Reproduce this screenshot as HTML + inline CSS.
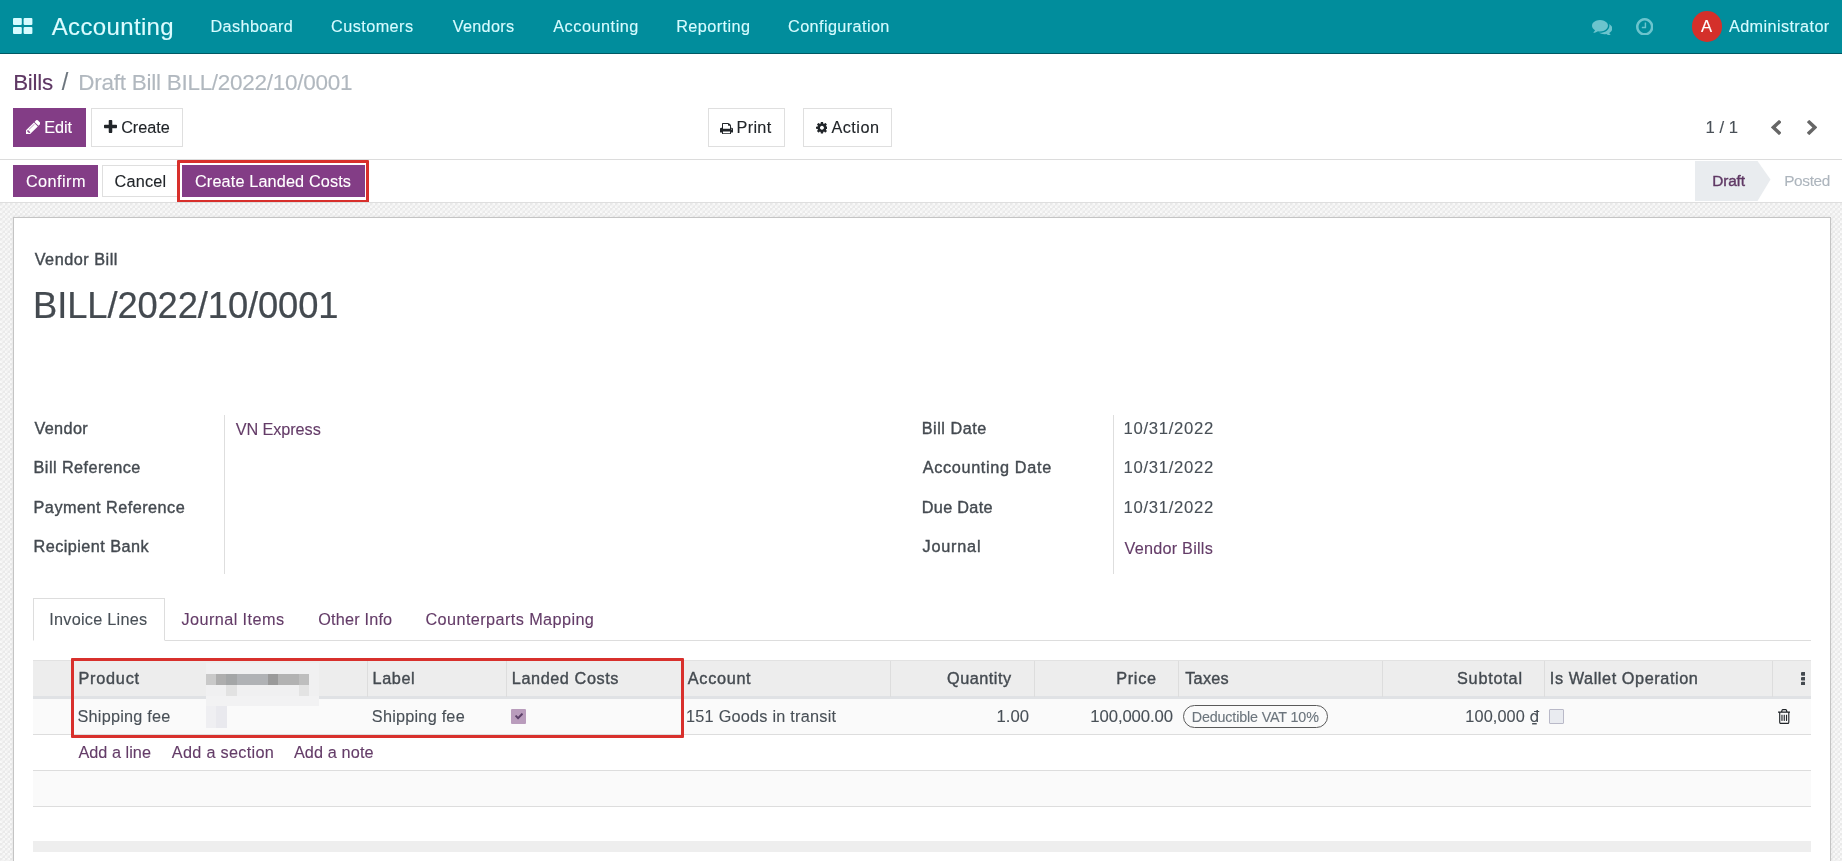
<!DOCTYPE html>
<html lang="en">
<head>
<meta charset="utf-8">
<title>Draft Bill BILL/2022/10/0001 - Accounting</title>
<style>
*{box-sizing:border-box;margin:0;padding:0}
html,body{width:1842px;height:861px;overflow:hidden;background:#fff;font-family:"Liberation Sans",sans-serif;color:#4c4c4c;font-size:16.25px}
a{text-decoration:none}
h1,b,label{font-weight:normal}
.t{position:absolute;white-space:pre;display:block;-webkit-text-stroke:.12px currentColor}
.page{position:absolute;left:0;top:0;width:1842px;height:861px;overflow:hidden;will-change:transform}
.m{-webkit-text-stroke:.38px currentColor}
.abs{position:absolute}
nav.top{position:absolute;left:0;top:0;width:1842px;height:54px;background:#018d9c;border-bottom:1px solid #005964}
.avatar{position:absolute;left:1691.5px;top:11px;width:30.5px;height:30.5px;border-radius:50%;background:#d4302a}
.cpanel{position:absolute;left:0;top:54px;width:1842px;height:106px;background:#fff;border-bottom:1px solid #dcdcdc}
.btn{position:absolute;border:1px solid #dfdfdf;background:#fff}
.btn.pri{background:#833d86;border-color:#833d86}
.statusbar{position:absolute;left:0;top:160px;width:1842px;height:42px;background:#fff}
.formbg{position:absolute;left:0;top:202px;width:1842px;height:659px;border-top:1px solid #dedede;background-color:#eaeaea;
 background-image:linear-gradient(45deg,#f9f9f9 25%,transparent 25%,transparent 75%,#f9f9f9 75%),linear-gradient(45deg,#f9f9f9 25%,transparent 25%,transparent 75%,#f9f9f9 75%);background-size:5px 5px;background-position:0 0,2.5px 2.5px}
.sheet{position:absolute;left:13px;top:217px;width:1818px;height:700px;background:#fff;border:1px solid #c4c4c4;box-shadow:0 0 4px rgba(0,0,0,.06)}
.vsep{position:absolute;width:1px;background:#dedede}
.hline{position:absolute;height:1px;background:#dddddd}
.redbox{position:absolute;border:3px solid #d8302c;border-radius:1px}
</style>
</head>
<body>
<div class="page">
<nav class="top">
  <svg class="abs" style="left:13px;top:18px" width="20" height="16" viewBox="0 0 20 16"><g fill="#d6fbff"><rect x="0" y="0" width="8.8" height="7" rx="1"/><rect x="10.6" y="0" width="8.8" height="7" rx="1"/><rect x="0" y="9" width="8.8" height="7" rx="1"/><rect x="10.6" y="9" width="8.8" height="7" rx="1"/></g></svg>
  <div class="avatar"></div>
<svg class="abs" style="left:1592.00px;top:19.80px;opacity:0.5" width="20.30" height="15.70" viewBox="0 256 1792 1408.111083984375" preserveAspectRatio="none"><path fill="#d6fbff" d="M1408 768q0 139-94 257t-256.500 186.500-353.500 68.500q-86 0-176-16-124 88-278 128-36 9-86 16h-3q-11 0-20.500-8t-11.500-21q-1-3-1-6.500t.5-6.500 2-6l2.500-5 3.500-5.500 4-5 4.500-5 4-4.500q5-6 23-25t26-29.500 22.500-29 25-38.500 20.500-44q-124-72-195-177t-71-224q0-139 94-257t256.500-186.500 353.500-68.500 353.500 68.500 256.500 186.500 94 257zm384 256q0 120-71 224.500t-195 176.500q10 24 20.500 44t25 38.500 22.500 29 26 29.500 23 25q1 1 4 4.500t4.500 5 4 5 3.500 5.500l2.500 5 2 6 .5 6.500-1 6.500q-3 14-13 22t-22 7q-50-7-86-16-154-40-278-128-90 16-176 16-271 0-472-132 58 4 88 4 161 0 309-45t264-129q125-92 192-212t67-254q0-77-23-152 129 71 204 178t75 230z"/></svg>
<svg class="abs" style="left:1635.80px;top:17.60px;opacity:0.5" width="17.40" height="17.60" viewBox="128 128 1536 1536" preserveAspectRatio="none"><path fill="#d6fbff" d="M1024 544v448q0 14-9 23t-23 9h-320q-14 0-23-9t-9-23v-64q0-14 9-23t23-9h224v-352q0-14 9-23t23-9h64q14 0 23 9t9 23zm416 352q0-148-73-273t-198-198-273-73-273 73-198 198-73 273 73 273 198 198 273 73 273-73 198-198 73-273zm224 0q0 209-103 385.500t-279.500 279.500-385.500 103-385.500-103-279.500-279.500-103-385.500 103-385.500 279.500-279.500 385.500-103 385.500 103 279.500 279.500 103 385.500z"/></svg>
<a class="t" style="left:51.67px;top:12px;font-size:24px;line-height:29px;color:#dcfcff;letter-spacing:0.364px;">Accounting</a>
<a class="t" style="left:210.51px;top:16px;font-size:16.25px;line-height:20px;color:#d6fbff;letter-spacing:0.364px;">Dashboard</a>
<a class="t" style="left:331.04px;top:16px;font-size:16.25px;line-height:20px;color:#d6fbff;letter-spacing:0.431px;">Customers</a>
<a class="t" style="left:452.67px;top:16px;font-size:16.25px;line-height:20px;color:#d6fbff;letter-spacing:0.300px;">Vendors</a>
<a class="t" style="left:553.20px;top:16px;font-size:16.25px;line-height:20px;color:#d6fbff;letter-spacing:0.533px;">Accounting</a>
<a class="t" style="left:676.17px;top:16px;font-size:16.25px;line-height:20px;color:#d6fbff;letter-spacing:0.418px;">Reporting</a>
<a class="t" style="left:788.06px;top:16px;font-size:16.25px;line-height:20px;color:#d6fbff;letter-spacing:0.388px;">Configuration</a>
<span class="t" style="left:1728.98px;top:16px;font-size:16.25px;line-height:20px;color:#d6fbff;letter-spacing:0.376px;">Administrator</span>
<span class="t" style="left:1701.00px;top:16px;font-size:16.6px;line-height:21px;color:#fff;letter-spacing:0.000px;">A</span>
</nav>
<div class="cpanel"></div>
<div class="btn pri" style="left:13px;top:108px;width:73px;height:38.5px"></div>
<div class="btn" style="left:91px;top:108px;width:92px;height:38.5px"></div>
<div class="btn" style="left:708px;top:108px;width:77px;height:38.5px"></div>
<div class="btn" style="left:803px;top:108px;width:89px;height:38.5px"></div>
<div class="statusbar"></div>
<div class="btn pri" style="left:13px;top:165px;width:85px;height:32px"></div>
<div class="btn" style="left:102px;top:165px;width:76px;height:32px"></div>
<div class="btn pri" style="left:182px;top:165px;width:183px;height:32px"></div>
<div class="redbox" style="left:177px;top:160px;width:192px;height:43px"></div>
<svg class="abs" style="left:1695px;top:161px" width="77" height="40" viewBox="0 0 77 40"><path d="M0 0H62.5L75.5 18.6L62.5 40H0Z" fill="#e9ecef"/></svg>
<svg class="abs" style="left:26.00px;top:120.10px" width="14.40" height="14.20" viewBox="128 149 1515 1515" preserveAspectRatio="none"><path fill="#fff" d="M491 1536l91-91-235-235-91 91v107h128v128h107zm523-928q0-22-22-22-10 0-17 7l-542 542q-7 7-7 17 0 22 22 22 10 0 17-7l542-542q7-7 7-17zm-54-192l416 416-832 832h-416v-416zm683 96q0 53-37 90l-166 166-416-416 166-165q36-38 90-38 53 0 91 38l235 234q37 39 37 91z"/></svg>
<svg class="abs" style="left:103.75px;top:120.20px" width="13.00" height="12.90" viewBox="192 128 1408 1408" preserveAspectRatio="none"><path fill="#212529" d="M1600 736v192q0 40-28 68t-68 28h-416v416q0 40-28 68t-68 28h-192q-40 0-68-28t-28-68v-416h-416q-40 0-68-28t-28-68v-192q0-40 28-68t68-28h416v-416q0-40 28-68t68-28h192q40 0 68 28t28 68v416h416q40 0 68 28t28 68z"/></svg>
<svg class="abs" style="left:720.00px;top:122.50px" width="13.00" height="11.25" viewBox="64 128 1664 1536" preserveAspectRatio="none"><path fill="#212529" d="M448 1536h896v-256h-896v256zm0-640h896v-384h-160q-40 0-68-28t-28-68v-160h-640v640zm1152 64q0-26-19-45t-45-19-45 19-19 45 19 45 45 19 45-19 19-45zm128 0v416q0 13-9.500 22.500t-22.500 9.500h-224v160q0 40-28 68t-68 28h-960q-40 0-68-28t-28-68v-160h-224q-13 0-22.500-9.500t-9.500-22.500v-416q0-79 56.500-135.500t135.500-56.500h64v-544q0-40 28-68t68-28h672q40 0 88 20t76 48l152 152q28 28 48 76t20 88v256h64q79 0 135.500 56.500t56.500 135.500z"/></svg>
<svg class="abs" style="left:815.60px;top:122.25px" width="11.90" height="11.50" viewBox="128 128 1536 1536" preserveAspectRatio="none"><path fill="#212529" d="M1152 896q0-106-75-181t-181-75-181 75-75 181 75 181 181 75 181-75 75-181zm512-109v222q0 12-8 23t-20 13l-185 28q-19 54-39 91 35 50 107 138 10 12 10 25t-9 23q-27 37-99 108t-94 71q-12 0-26-9l-138-108q-44 23-91 38-16 136-29 186-7 28-36 28h-222q-14 0-24.500-8.500t-11.500-21.500l-28-184q-49-16-90-37l-141 107q-10 9-25 9-14 0-25-11-126-114-165-168-7-10-7-23 0-12 8-23 15-21 51-66.500t54-70.500q-27-50-41-99l-183-27q-13-2-21-12.500t-8-23.500v-222q0-12 8-23t19-13l186-28q14-46 39-92-40-57-107-138-10-12-10-24 0-10 9-23 26-36 98.500-107.500t94.500-71.500q13 0 26 10l138 107q44-23 91-38 16-136 29-186 7-28 36-28h222q14 0 24.500 8.500t11.500 21.500l28 184q49 16 90 37l142-107q9-9 24-9 13 0 25 10 129 119 165 170 7 8 7 22 0 12-8 23-15 21-51 66.500t-54 70.500q26 50 41 98l183 28q13 2 21 12.500t8 23.500z"/></svg>
<svg class="abs" style="left:1771.00px;top:120.00px" width="10.30" height="14.90" viewBox="410 26 1036 1612" preserveAspectRatio="none"><path fill="#666" d="M1427 301l-531 531 531 531q19 19 19 45t-19 45l-166 166q-19 19-45 19t-45-19l-742-742q-19-19-19-45t19-45l742-742q19-19 45-19t45 19l166 166q19 19 19 45t-19 45z"/></svg>
<svg class="abs" style="left:1806.80px;top:120.00px" width="10.20" height="14.90" viewBox="346 26 1036 1612" preserveAspectRatio="none"><path fill="#666" d="M1363 877l-742 742q-19 19-45 19t-45-19l-166-166q-19-19-19-45t19-45l531-531-531-531q-19-19-19-45t19-45l166-166q19-19 45-19t45 19l742 742q19 19 19 45t-19 45z"/></svg>
<a class="t" style="left:13.17px;top:69px;font-size:22.4px;line-height:27px;color:#5f3864;letter-spacing:-0.241px;">Bills</a>
<span class="t" style="left:61.80px;top:68px;font-size:23.5px;line-height:28px;color:#6c757d;letter-spacing:0.000px;">/</span>
<span class="t" style="left:78.35px;top:69px;font-size:22.5px;line-height:27px;color:#b1b8bf;letter-spacing:-0.268px;">Draft Bill BILL/2022/10/0001</span>
<span class="t" style="left:44.15px;top:117px;font-size:16.25px;line-height:20px;color:#fff;letter-spacing:-0.015px;">Edit</span>
<span class="t" style="left:121.18px;top:117px;font-size:16.25px;line-height:20px;color:#212529;letter-spacing:-0.035px;">Create</span>
<span class="t" style="left:736.58px;top:117px;font-size:16.25px;line-height:20px;color:#212529;letter-spacing:0.296px;">Print</span>
<span class="t" style="left:831.40px;top:117px;font-size:16.25px;line-height:20px;color:#212529;letter-spacing:0.500px;">Action</span>
<span class="t" style="left:1705.62px;top:117px;font-size:16.7px;line-height:21px;color:#495057;letter-spacing:0.018px;">1 / 1</span>
<span class="t" style="left:25.93px;top:171px;font-size:16.25px;line-height:20px;color:#fff;letter-spacing:0.440px;">Confirm</span>
<span class="t" style="left:114.47px;top:171px;font-size:16.25px;line-height:20px;color:#212529;letter-spacing:0.226px;">Cancel</span>
<span class="t" style="left:195.01px;top:171px;font-size:16.25px;line-height:20px;color:#fff;letter-spacing:0.133px;">Create Landed Costs</span>
<span class="t m" style="left:1712.24px;top:171px;font-size:15.4px;line-height:19px;color:#5f3864;letter-spacing:-0.155px;">Draft</span>
<span class="t" style="left:1784.19px;top:171px;font-size:15.4px;line-height:19px;color:#adb5bd;letter-spacing:-0.345px;">Posted</span>
<div class="formbg"></div>
<div class="sheet">
  <div class="vsep" style="left:210px;top:197px;height:159px"></div>
  <div class="vsep" style="left:1099px;top:197px;height:159px"></div>
  <div class="hline" style="left:19px;top:422px;width:1778px"></div>
  <div class="abs" style="left:19px;top:380px;width:132px;height:43px;border:1px solid #dddddd;border-bottom-color:#fff;background:#fff"></div>
  <!-- table -->
  <div class="abs" style="left:19px;top:442px;width:1778px;height:36px;background:#ededed;border-top:1px solid #e2e2e2"></div>
  <div class="abs" style="left:19px;top:478px;width:1778px;height:3px;background:#e0e2e5"></div>
  <div class="abs" style="left:19px;top:481px;width:1778px;height:35.5px;background:#fafafa;border-bottom:1px solid #dddddd"></div>
  <div class="abs" style="left:19px;top:516.5px;width:1778px;height:36px;background:#fff;border-bottom:1px solid #dddddd"></div>
  <div class="abs" style="left:19px;top:552.5px;width:1778px;height:36.5px;background:#fafafa;border-bottom:1px solid #dddddd"></div>
  <div class="abs" style="left:19px;top:623px;width:1778px;height:11px;background:#eeeeee"></div>
  <div class="vsep" style="left:353px;top:443px;height:35.5px;background:#dddddd"></div>
  <div class="vsep" style="left:492px;top:443px;height:35.5px;background:#dddddd"></div>
  <div class="vsep" style="left:876px;top:443px;height:35.5px;background:#dddddd"></div>
  <div class="vsep" style="left:1020px;top:443px;height:35.5px;background:#dddddd"></div>
  <div class="vsep" style="left:1164px;top:443px;height:35.5px;background:#dddddd"></div>
  <div class="vsep" style="left:1368px;top:443px;height:35.5px;background:#dddddd"></div>
  <div class="vsep" style="left:1530px;top:443px;height:35.5px;background:#dddddd"></div>
  <div class="vsep" style="left:1758px;top:443px;height:35.5px;background:#dddddd"></div>
  <div class="abs" style="left:192px;top:445px;width:113px;height:34px;background:#f0f0f1"></div>
  <div class="abs" style="left:192px;top:478px;width:113px;height:10px;background:#f2f2f3"></div>
  <div class="abs" style="left:192px;top:456px;width:103px;height:10.5px;background:linear-gradient(90deg,#c9c9c9 0px,#c9c9c9 10px,#aeaeae 10px,#aeaeae 20px,#a4a6a7 20px,#a4a6a7 31px,#b0b2b5 31px,#b0b2b5 62px,#9a9a9a 62px,#9a9a9a 72px,#b2b2b2 72px,#b2b2b2 93px,#bebebe 93px,#bebebe 103px)"></div>
  <div class="abs" style="left:212px;top:466.5px;width:11px;height:11px;background:#e2e2e2"></div>
  <div class="abs" style="left:285px;top:466.5px;width:10px;height:11px;background:#e3e3e3"></div>
  <div class="abs" style="left:192px;top:488px;width:20.5px;height:22px;background:linear-gradient(90deg,#efeff2 50%,#e9e9ee 50%)"></div>
  <div class="abs" style="left:497px;top:491px;width:15px;height:15px;background:#b99cbc;border-radius:1px"><svg class="abs" style="left:3.5px;top:4px" width="8" height="6.5" viewBox="121 334 1550 1188" preserveAspectRatio="none"><path fill="#5b4068" d="M1671 566q0 40-28 68l-724 724-136 136q-28 28-68 28t-68-28l-136-136-362-362q-28-28-28-68t28-68l136-136q28-28 68-28t68 28l294 295 656-657q28-28 68-28t68 28l136 136q28 28 28 68z"/></svg></div>
  <div class="abs" style="left:1535px;top:491px;width:15px;height:15px;background:#e9ebf0;border:1px solid #b9b9c8;border-radius:1px"></div>
  <div class="abs" style="left:1169.25px;top:487.25px;width:145px;height:22.75px;border:1px solid #5a5a5a;border-radius:12px"></div>
  <div class="redbox" style="left:57px;top:440px;width:613px;height:80px"></div>
<svg class="abs" style="left:1786.75px;top:453.75px" width="4.65" height="13.50" viewBox="704 128 384 1408" preserveAspectRatio="none"><path fill="#444a50" d="M1088 1248v192q0 40-28 68t-68 28h-192q-40 0-68-28t-28-68v-192q0-40 28-68t68-28h192q40 0 68 28t28 68zm0-512v192q0 40-28 68t-68 28h-192q-40 0-68-28t-28-68v-192q0-40 28-68t68-28h192q40 0 68 28t28 68zm0-512v192q0 40-28 68t-68 28h-192q-40 0-68-28t-28-68v-192q0-40 28-68t68-28h192q40 0 68 28t28 68z"/></svg>
<svg class="abs" style="left:1763.75px;top:490.50px" width="12.50" height="15.00" viewBox="192 128 1408 1536" preserveAspectRatio="none"><path fill="#212529" d="M704 736v576q0 14-9 23t-23 9h-64q-14 0-23-9t-9-23v-576q0-14 9-23t23-9h64q14 0 23 9t9 23zm256 0v576q0 14-9 23t-23 9h-64q-14 0-23-9t-9-23v-576q0-14 9-23t23-9h64q14 0 23 9t9 23zm256 0v576q0 14-9 23t-23 9h-64q-14 0-23-9t-9-23v-576q0-14 9-23t23-9h64q14 0 23 9t9 23zm128 724v-948h-896v948q0 22 7 40.500t14.500 27 10.500 8.500h832q3 0 10.500-8.500t14.500-27 7-40.500zm-672-1076h448l-48-117q-7-9-17-11h-317q-10 2-17 11zm928 32v64q0 14-9 23t-23 9h-96v948q0 83-47 143.500t-113 60.500h-832q-66 0-113-58.500t-47-141.500v-952h-96q-14 0-23-9t-9-23v-64q0-14 9-23t23-9h309l70-167q15-37 54-63t79-26h320q40 0 79 26t54 63l70 167h309q14 0 23 9t9 23z"/></svg>
<span class="t m" style="left:20.67px;top:31px;font-size:16.25px;line-height:20px;color:#444a50;letter-spacing:0.512px;">Vendor Bill</span>
<h1 class="t" style="left:19.06px;top:66px;font-size:36.3px;line-height:43px;color:#444a50;letter-spacing:-0.083px;-webkit-text-stroke:.22px currentColor;">BILL/2022/10/0001</h1>
<label class="t m" style="left:20.40px;top:200px;font-size:16.25px;line-height:20px;color:#444a50;letter-spacing:0.369px;">Vendor</label>
<label class="t m" style="left:19.58px;top:239px;font-size:16.25px;line-height:20px;color:#444a50;letter-spacing:0.434px;">Bill Reference</label>
<label class="t m" style="left:19.57px;top:279px;font-size:16.25px;line-height:20px;color:#444a50;letter-spacing:0.469px;">Payment Reference</label>
<label class="t m" style="left:19.53px;top:318px;font-size:16.25px;line-height:20px;color:#444a50;letter-spacing:0.444px;">Recipient Bank</label>
<a class="t" style="left:221.65px;top:201px;font-size:16.25px;line-height:20px;color:#643c68;letter-spacing:-0.075px;">VN Express</a>
<label class="t m" style="left:907.75px;top:200px;font-size:16.25px;line-height:20px;color:#444a50;letter-spacing:0.508px;">Bill Date</label>
<label class="t m" style="left:908.68px;top:239px;font-size:16.25px;line-height:20px;color:#444a50;letter-spacing:0.662px;">Accounting Date</label>
<label class="t m" style="left:907.79px;top:279px;font-size:16.25px;line-height:20px;color:#444a50;letter-spacing:0.304px;">Due Date</label>
<label class="t m" style="left:908.53px;top:318px;font-size:16.25px;line-height:20px;color:#444a50;letter-spacing:0.779px;">Journal</label>
<span class="t" style="left:1109.54px;top:200px;font-size:16.7px;line-height:21px;color:#495057;letter-spacing:0.691px;">10/31/2022</span>
<span class="t" style="left:1109.54px;top:239px;font-size:16.7px;line-height:21px;color:#495057;letter-spacing:0.691px;">10/31/2022</span>
<span class="t" style="left:1109.54px;top:279px;font-size:16.7px;line-height:21px;color:#495057;letter-spacing:0.691px;">10/31/2022</span>
<a class="t" style="left:1110.51px;top:320px;font-size:16.25px;line-height:20px;color:#643c68;letter-spacing:0.227px;">Vendor Bills</a>
<a class="t" style="left:35.34px;top:391px;font-size:16.25px;line-height:20px;color:#495057;letter-spacing:0.240px;">Invoice Lines</a>
<a class="t" style="left:167.45px;top:391px;font-size:16.25px;line-height:20px;color:#643c68;letter-spacing:0.419px;">Journal Items</a>
<a class="t" style="left:304.31px;top:391px;font-size:16.25px;line-height:20px;color:#643c68;letter-spacing:0.177px;">Other Info</a>
<a class="t" style="left:411.45px;top:391px;font-size:16.25px;line-height:20px;color:#643c68;letter-spacing:0.404px;">Counterparts Mapping</a>
<b class="t m" style="left:64.50px;top:450px;font-size:16.25px;line-height:20px;color:#444a50;letter-spacing:0.755px;">Product</b>
<b class="t m" style="left:358.55px;top:450px;font-size:16.25px;line-height:20px;color:#444a50;letter-spacing:0.595px;">Label</b>
<b class="t m" style="left:497.79px;top:450px;font-size:16.25px;line-height:20px;color:#444a50;letter-spacing:0.579px;">Landed Costs</b>
<b class="t m" style="left:673.83px;top:450px;font-size:16.25px;line-height:20px;color:#444a50;letter-spacing:0.682px;">Account</b>
<b class="t m" style="left:933.01px;top:450px;font-size:16.25px;line-height:20px;color:#444a50;letter-spacing:0.503px;">Quantity</b>
<b class="t m" style="left:1102.25px;top:450px;font-size:16.25px;line-height:20px;color:#444a50;letter-spacing:0.683px;">Price</b>
<b class="t m" style="left:1171.20px;top:450px;font-size:16.25px;line-height:20px;color:#444a50;letter-spacing:0.271px;">Taxes</b>
<b class="t m" style="left:1443.02px;top:450px;font-size:16.25px;line-height:20px;color:#444a50;letter-spacing:0.765px;">Subtotal</b>
<b class="t m" style="left:1535.84px;top:450px;font-size:16.25px;line-height:20px;color:#444a50;letter-spacing:0.582px;">Is Wallet Operation</b>
<span class="t" style="left:63.55px;top:488px;font-size:16.25px;line-height:20px;color:#495057;letter-spacing:0.209px;">Shipping fee</span>
<span class="t" style="left:357.84px;top:488px;font-size:16.25px;line-height:20px;color:#495057;letter-spacing:0.227px;">Shipping fee</span>
<span class="t" style="left:672.07px;top:488px;font-size:16.25px;line-height:20px;color:#495057;letter-spacing:0.240px;">151 Goods in transit</span>
<span class="t" style="left:982.53px;top:488px;font-size:16.7px;line-height:21px;color:#495057;letter-spacing:0.021px;">1.00</span>
<span class="t" style="left:1076.34px;top:488px;font-size:16.7px;line-height:21px;color:#495057;letter-spacing:-0.097px;">100,000.00</span>
<span class="t" style="left:1451.34px;top:488px;font-size:16.25px;line-height:20px;color:#495057;letter-spacing:0.120px;">100,000 <span style="font-family:'DejaVu Sans',sans-serif;font-size:15.5px">₫</span></span>
<span class="t" style="left:1177.75px;top:490px;font-size:14.3px;line-height:18px;color:#6c757d;letter-spacing:-0.144px;">Deductible VAT 10%</span>
<a class="t" style="left:64.45px;top:524px;font-size:16.25px;line-height:20px;color:#643c68;letter-spacing:0.024px;">Add a line</a>
<a class="t" style="left:157.83px;top:524px;font-size:16.25px;line-height:20px;color:#643c68;letter-spacing:0.289px;">Add a section</a>
<a class="t" style="left:279.91px;top:524px;font-size:16.25px;line-height:20px;color:#643c68;letter-spacing:0.116px;">Add a note</a>
</div>
</div>
</body>
</html>
